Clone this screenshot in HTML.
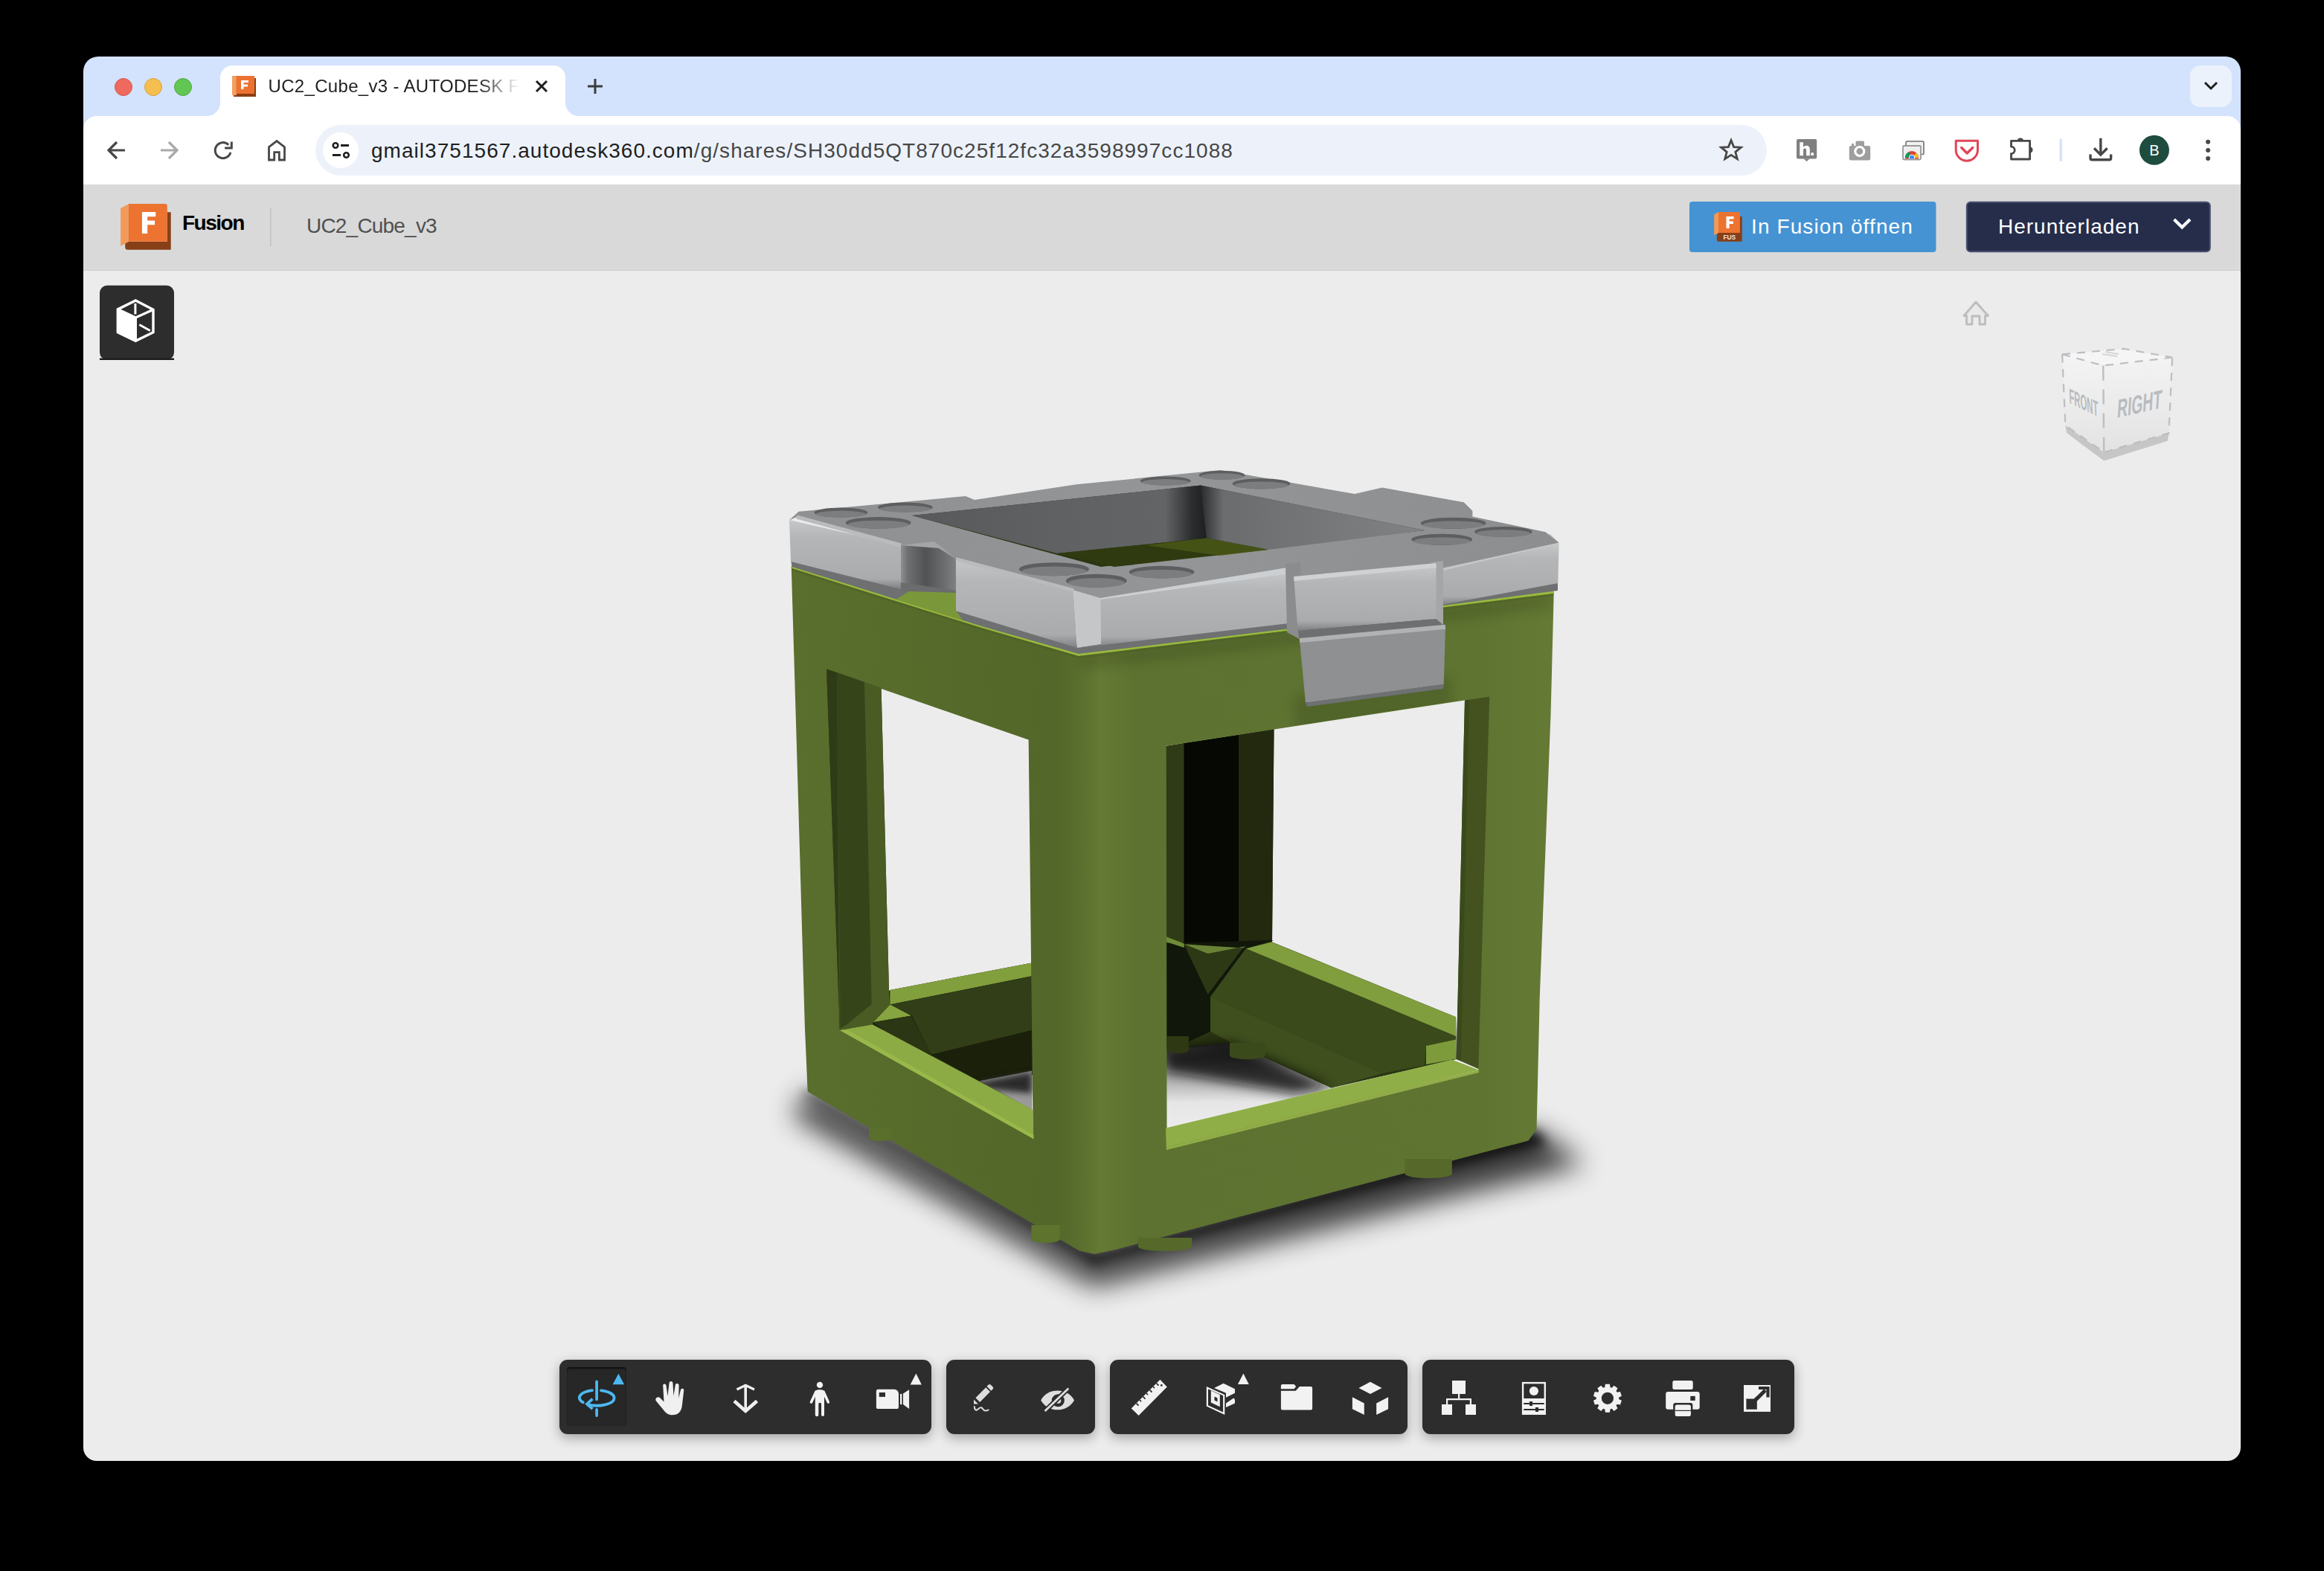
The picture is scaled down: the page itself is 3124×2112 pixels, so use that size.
<!DOCTYPE html>
<html><head><meta charset="utf-8">
<style>
html,body{margin:0;padding:0;}
body{width:3124px;height:2112px;background:#000;position:relative;overflow:hidden;font-family:"Liberation Sans",sans-serif;}
.a{position:absolute;}
#tabstrip{left:112px;top:76px;width:2900px;height:80px;background:#d3e3fd;border-radius:20px 20px 0 0;}
#toolbar{left:112px;top:156px;width:2900px;height:92px;background:#fff;}
#header{left:112px;top:248px;width:2900px;height:115px;background:#d9d9d9;}
#viewer{left:112px;top:364px;width:2900px;height:1600px;background:#ececec;border-radius:0 0 18px 18px;}
.tl{width:24px;height:24px;border-radius:50%;top:105px;}
#tab{left:296px;top:88px;width:464px;height:68px;background:#fff;border-radius:16px 16px 0 0;}
.flare{width:18px;height:18px;top:138px;background:#fff;}
.flare i{position:absolute;left:0;top:0;width:18px;height:18px;background:#d3e3fd;}
#omni{left:424px;top:168px;width:1951px;height:68px;background:#edf2fa;border-radius:34px;}
.ttl{font-size:24px;color:#1f1f1f;white-space:nowrap;}
.url{font-size:28px;white-space:nowrap;}
.grp{background:#2d2d2d;border-radius:11px;top:1828px;height:100px;box-shadow:0 5px 16px rgba(0,0,0,0.32);}
</style></head>
<body>
<div id="tabstrip" class="a"></div>
<div id="toolbar" class="a"></div>
<div id="header" class="a"></div>
<div id="viewer" class="a"></div>

<!-- traffic lights -->
<div class="a tl" style="left:154px;background:#ee6a5f;border:1px solid #d65548;box-sizing:border-box"></div>
<div class="a tl" style="left:194px;background:#f5be4f;border:1px solid #d9a23b;box-sizing:border-box"></div>
<div class="a tl" style="left:234px;background:#62c655;border:1px solid #4fa93f;box-sizing:border-box"></div>

<!-- tab -->
<div id="tab" class="a"></div>
<div class="a flare" style="left:278px;"><i style="border-radius:0 0 18px 0"></i></div>
<div class="a flare" style="left:760px;"><i style="border-radius:0 0 0 18px"></i></div>


<!-- toolbar rounded corners -->
<div class="a" style="left:112px;top:156px;width:18px;height:18px;background:#d3e3fd"><i style="position:absolute;left:0;top:0;width:18px;height:18px;background:#fff;border-radius:18px 0 0 0"></i></div>
<div class="a" style="left:2994px;top:156px;width:18px;height:18px;background:#d3e3fd"><i style="position:absolute;left:0;top:0;width:18px;height:18px;background:#fff;border-radius:0 18px 0 0"></i></div>

<!-- tab dropdown -->
<div class="a" style="left:2944px;top:88px;width:56px;height:56px;border-radius:14px;background:#ecf2fc"></div>

<!-- omnibox -->
<div id="omni" class="a"></div>
<div class="a" style="left:434px;top:178px;width:48px;height:48px;border-radius:50%;background:#fff"></div>

<!-- favicon -->
<svg class="a" style="left:0;top:0" width="3124" height="400" viewBox="0 0 3124 400">
  <!-- tab favicon -->
  <rect x="314" y="105" width="30" height="25" fill="#8a3f14"/>
  <rect x="312" y="102" width="6" height="26" fill="#f0a060"/>
  <rect x="317.5" y="102" width="24.5" height="24" fill="#ec7231"/>
  <path d="M324 108h10v3h-6.5v2.5h5.5v3h-5.5v3.5H324z" fill="#fff"/>
  <!-- tab close -->
  <path d="M721 109L735 123M735 109L721 123" stroke="#1f1f1f" stroke-width="3" stroke-linecap="butt"/>
  <!-- new tab + -->
  <path d="M800 106V126M790 116H810" stroke="#3c3c3c" stroke-width="3"/>
  <!-- tab dropdown chevron -->
  <path d="M2964 111L2972 119L2980 111" fill="none" stroke="#1f1f1f" stroke-width="3"/>
  <!-- back -->
  <path d="M168 202H146M157 191L146 202L157 213" fill="none" stroke="#474747" stroke-width="3.2"/>
  <!-- forward -->
  <path d="M216 202H238M227 191L238 202L227 213" fill="none" stroke="#a9a9a9" stroke-width="3.2"/>
  <!-- reload -->
  <path d="M309.9 204.8A10.5 10.5 0 1 1 307.2 194.7" fill="none" stroke="#474747" stroke-width="3"/>
  <path d="M302.1 199H311.3V190.4" fill="none" stroke="#474747" stroke-width="3"/>
  <!-- home -->
  <path d="M361.5 215V197.6L372 189.6L382.5 197.6V215H375.3V204.6H368.7V215Z" fill="none" stroke="#474747" stroke-width="2.8"/>
  <!-- tune -->
  <circle cx="451" cy="195.5" r="3.3" fill="none" stroke="#1f1f1f" stroke-width="2.6"/>
  <path d="M458 195.5H469M447 208.5H458" stroke="#1f1f1f" stroke-width="2.8"/>
  <circle cx="465.5" cy="208.5" r="3.3" fill="none" stroke="#1f1f1f" stroke-width="2.6"/>
  <!-- star -->
  <path d="M2327 188.5L2330.6 197.6L2340.3 198.1L2332.8 204.3L2335.3 213.7L2327 208.4L2318.7 213.7L2321.2 204.3L2313.7 198.1L2323.4 197.6Z" fill="none" stroke="#474747" stroke-width="2.8" stroke-linejoin="miter"/>
</svg>

<div class="a ttl" style="left:360.5px;top:99px;letter-spacing:0.32px;line-height:34px;width:340px;overflow:hidden;-webkit-mask-image:linear-gradient(90deg,#000 0,#000 282px,transparent 337px)">UC2_Cube_v3 - AUTODESK F</div>
<div class="a url" style="left:499px;top:184px;line-height:38px;letter-spacing:1.04px"><span style="color:#1f1f1f">gmail3751567.autodesk360.com</span><span style="color:#474747">/g/shares/SH30dd5QT870c25f12fc32a3598997cc1088</span></div>


<svg class="a" style="left:0;top:0" width="3124" height="400" viewBox="0 0 3124 400">
  <!-- hypothesis -->
  <rect x="2415" y="187" width="27.2" height="26.5" rx="2" fill="#808080"/>
  <path d="M2424.5 213.4L2428.6 217L2432.7 213.4Z" fill="#808080"/>
  <path d="M2419.3 191.3h4.7v6.6c1.2-1.5 2.8-2.2 4.3-2.2 3 0 4.5 2 4.5 5.2v8.4h-4.7v-7.6c0-1.4-.6-2.1-1.8-2.1s-2.3.8-2.3 2.4v7.3h-4.7z" fill="#fff"/>
  <circle cx="2436.2" cy="207.2" r="2.1" fill="#fff"/>
  <!-- camera -->
  <rect x="2485.8" y="196" width="28.4" height="19.4" rx="2" fill="#9e9e9e"/>
  <rect x="2494.5" y="189.5" width="11.5" height="8" rx="1.5" fill="#9e9e9e"/>
  <rect x="2489" y="193" width="3" height="4" fill="#9e9e9e"/>
  <circle cx="2499.8" cy="203.5" r="6" fill="none" stroke="#fff" stroke-width="3.2"/>
  <circle cx="2499.8" cy="203.5" r="2.6" fill="#9e9e9e"/>
  <!-- cast windows -->
  <rect x="2562" y="190" width="24" height="17.5" rx="1.5" fill="#f2f2f2" stroke="#6e6e6e" stroke-width="1.6"/>
  <rect x="2558" y="196" width="24" height="18.5" rx="1.5" fill="#eeeeee" stroke="#9a9a9a" stroke-width="1.8"/>
  <clipPath id="cw"><rect x="2559" y="197" width="22" height="16.5"/></clipPath>
  <g clip-path="url(#cw)">
    <circle cx="2570" cy="212" r="9" fill="#db4437"/>
    <path d="M2570 212L2561 212A9 9 0 0 1 2565.5 204.2Z" fill="#0f9d58"/>
    <path d="M2570 212L2579 212A9 9 0 0 0 2576 205.5Z" fill="#f4c20d"/>
    <circle cx="2570" cy="212" r="4.2" fill="#fff"/>
    <circle cx="2570" cy="212" r="3.2" fill="#4285f4"/>
  </g>
  <!-- pocket -->
  <path d="M2629.2 189.2H2658.5V201.5A14.6 14.6 0 0 1 2629.2 201.5Z" fill="none" stroke="#e0465a" stroke-width="3" stroke-linejoin="round"/>
  <path d="M2636.7 198.5L2644.2 206L2651.8 198.5" fill="none" stroke="#e0465a" stroke-width="3.4" stroke-linecap="round" stroke-linejoin="round"/>
  <!-- puzzle -->
  <path d="M2703.5 189.3H2728.6V214H2703.5V206.6A4.7 4.7 0 0 0 2703.5 197.2Z" fill="none" stroke="#474747" stroke-width="2.8" stroke-linejoin="round"/>
  <path d="M2711.8 189.5A4.1 4.1 0 0 1 2720 189.5Z" fill="#474747"/>
  <path d="M2728.4 197.5A4.1 4.1 0 0 1 2728.4 205.7Z" fill="#474747"/>
  <!-- separator -->
  <rect x="2768.5" y="186.3" width="3.4" height="31" rx="1.7" fill="#d3e3fd"/>
  <!-- download -->
  <path d="M2823.8 185.8V207M2815 199.3L2823.8 208.1L2832.6 199.3" fill="none" stroke="#474747" stroke-width="3.4"/>
  <path d="M2810 207.5V212.8A2 2 0 0 0 2812 214.8H2835.6A2 2 0 0 0 2837.6 212.8V207.5" fill="none" stroke="#474747" stroke-width="3.4"/>
  <!-- avatar -->
  <circle cx="2895.9" cy="201.8" r="20" fill="#1e4d40"/>
  <!-- kebab -->
  <circle cx="2968.1" cy="190.7" r="3" fill="#474747"/>
  <circle cx="2968.1" cy="202" r="3" fill="#474747"/>
  <circle cx="2968.1" cy="213.1" r="3" fill="#474747"/>
</svg>
<div class="a" style="left:2876px;top:190px;width:40px;text-align:center;font-size:20px;line-height:24px;color:#fff">B</div>


<!-- header -->
<div class="a" style="left:112px;top:360px;width:2900px;height:2px;background:#dcdcdc"></div><div class="a" style="left:112px;top:362px;width:2900px;height:2px;background:#d3d3d3"></div>
<svg class="a" style="left:0;top:240px" width="3124" height="260" viewBox="0 240 3124 260">
  <!-- fusion logo -->
  <path d="M168.2 325.1H229.7V285.3H224.8V324.7H172.9Z" fill="#873f17"/>
  <path d="M168.2 325.1H229.7V335.7H171.7A3.5 3.5 0 0 1 168.2 332.2Z" fill="#873f17"/>
  <path d="M162.1 280.1L172.9 274.2V325.1L162.1 331.1Z" fill="#f19b5a"/>
  <path d="M172.9 274H221.8A3 3 0 0 1 224.8 277V324.7H172.9Z" fill="#ec7330"/>
  <path d="M190.9 285H209.3V291.2H198.2V296.5H208.1V302.2H198.2V313.9H190.9Z" fill="#fff"/>
  <!-- separator -->
  <rect x="363" y="279" width="1.5" height="52" fill="#c2c2c2"/>
  <!-- blue button -->
  <rect x="2271" y="271" width="331.5" height="68" rx="4" fill="#4593d3"/>
  <path d="M2307.8 313H2341.7V291H2338.9V313Z" fill="#873f17"/>
  <path d="M2307.8 313H2341.7V324.8H2309.8A2 2 0 0 1 2307.8 322.8Z" fill="#873f17"/>
  <path d="M2304.1 288.2L2310 285.3V313.2L2304.1 316.2Z" fill="#f19b5a"/>
  <path d="M2310 285.1H2337.4A1.5 1.5 0 0 1 2338.9 286.6V313H2310Z" fill="#ec7330"/>
  <path d="M2320.5 291H2330.5V294.5H2324.6V297.5H2330V301H2324.6V307.1H2320.5Z" fill="#fff"/>
  <text x="2324.8" y="322.2" font-family="Liberation Sans" font-weight="700" font-size="8.4" fill="#f5e6dc" text-anchor="middle">FUS</text>
  <!-- dark button -->
  <rect x="2643.8" y="271.8" width="327" height="66.4" rx="5" fill="#252d4b" stroke="#4b5272" stroke-width="2"/>
  <path d="M2922.5 295L2933.2 305.5L2944 295" fill="none" stroke="#fff" stroke-width="4.2"/>
  <!-- cube button -->
  <rect x="134" y="383.8" width="100" height="100" rx="10" fill="#2d2d2d"/>
  <rect x="134" y="481.5" width="100" height="2.5" fill="#1e1e1e"/>
  <path d="M158.3 415.9L182.3 427V458.3L158.3 446.8Z" fill="#fff" stroke="#fff" stroke-width="2.5" stroke-linejoin="round"/>
  <path d="M182.3 404L206 416.3V446.8L182.3 458.3L158.3 446.8V415.9Z" fill="none" stroke="#fff" stroke-width="3.4" stroke-linejoin="miter"/>
  <path d="M158.3 415.9L182.3 427L206 416.3M182.3 427V458.3" fill="none" stroke="#fff" stroke-width="3.4"/>
  <path d="M181.9 407.9V422.4M187.3 436.5L201.8 444.5" stroke="#fff" stroke-width="3"/>
</svg>
<div class="a" style="left:245px;top:283px;font-size:28px;line-height:34px;font-weight:700;color:#000;letter-spacing:-1.5px">Fusion</div>
<div class="a" style="left:412px;top:287px;font-size:28px;line-height:34px;color:#505050;letter-spacing:-0.8px">UC2_Cube_v3</div>
<div class="a" style="left:2354px;top:288px;font-size:28px;line-height:34px;color:#fff;letter-spacing:1.1px">In Fusion öffnen</div>
<div class="a" style="left:2686px;top:288px;font-size:28px;line-height:34px;color:#fff;letter-spacing:1.0px">Herunterladen</div>


<!-- bottom toolbar -->
<div class="a grp" style="left:752px;width:500px"></div>
<div class="a grp" style="left:1272px;width:200px"></div>
<div class="a grp" style="left:1492px;width:400px"></div>
<div class="a grp" style="left:1912px;width:500px"></div>
<div class="a" style="left:762px;top:1838px;width:80px;height:79px;border-radius:4px;background:#272727;box-shadow:inset 0 2px 2px rgba(0,0,0,0.6)"></div>
<svg class="a" style="left:0;top:1800px" width="3124" height="160" viewBox="0 1800 3124 160">
  <g fill="none" stroke="#4db8f0" stroke-width="3.8" stroke-linecap="round">
    <path d="M802.1 1857.5V1881.3M802.1 1895V1903"/>
    <path d="M796 1869.2A23.5 10.2 0 0 0 783.8 1885.3"/>
    <path d="M790 1888.2A23.5 10.2 0 0 0 825.6 1879.4A23.5 10.2 0 0 0 808 1869.3"/>
    <path d="M796.5 1880.6L789 1887.4L796.5 1894.2" stroke-linejoin="miter" stroke-linecap="butt"/>
  </g>
  <path d="M823.6 1861.3L831.4 1846.7L839.1 1861.3Z" fill="#4db8f0"/>
  <!-- hand -->
  <path d="M881.5 1880.5C882.5 1878 885.5 1877.5 887.5 1879.5L892.5 1884.5L891.2 1862.5C891 1859.8 895.3 1859.8 895.5 1862.5L897.5 1877L899.6 1859C899.8 1856.2 904.2 1856.2 904.4 1859L905.5 1876.5L907.8 1862C908.2 1859.3 912.5 1859.6 912.6 1862.3L912.3 1879.5L915 1868.5C915.6 1866 919.6 1866.5 919.3 1869L916.8 1890C916 1897.5 911.5 1902.3 904 1902.3C898 1902.3 894.6 1899.5 891.5 1895L882 1883.5C881.2 1882.6 881.2 1881.5 881.5 1880.5Z" fill="#f0f0f0"/>
  <!-- zoom arrows -->
  <path d="M1002.2 1863V1894" stroke="#f0f0f0" stroke-width="3.6"/>
  <path d="M990.5 1868L1002.2 1862.3L1014 1868" fill="none" stroke="#f0f0f0" stroke-width="3.4"/>
  <path d="M987 1883.5L1002.2 1897L1017.5 1883.5" fill="none" stroke="#f0f0f0" stroke-width="4.6"/>
  <!-- person -->
  <circle cx="1102" cy="1861.9" r="4.2" fill="#f2f2f2"/>
  <path d="M1095.8 1872.5A4.2 4.2 0 0 1 1100 1868.3H1103.8A4.2 4.2 0 0 1 1108 1872.5V1902A2 2 0 0 1 1104 1902V1887.5A1.85 1.85 0 0 0 1100.3 1887.5V1902A2.25 2.25 0 0 1 1095.8 1902Z" fill="#f2f2f2"/>
  <path d="M1097 1871L1090.5 1885M1107 1871L1113.3 1885" stroke="#f2f2f2" stroke-width="3.6" stroke-linecap="round"/>
  <!-- camera -->
  <path d="M1180.6 1867.8H1202A6 6 0 0 1 1208 1873.8V1891.4A2.7 2.7 0 0 1 1205.3 1894.1H1180.6A2.7 2.7 0 0 1 1177.9 1891.4V1870.5A2.7 2.7 0 0 1 1180.6 1867.8Z" fill="#f2f2f2"/>
  <rect x="1181.8" y="1872" width="8.2" height="5.9" fill="#2d2d2d"/>
  <rect x="1210" y="1873.9" width="2.4" height="14.2" fill="#f2f2f2"/>
  <path d="M1214 1873.6L1222.1 1868.2V1894.1L1214 1888.1Z" fill="#f2f2f2"/>
  <path d="M1223.7 1861.4L1231.4 1846.5L1238.9 1861.4Z" fill="#f2f2f2"/>
  <!-- pencil -->
  <path d="M1326.5 1863.8L1328.8 1861.6A2 2 0 0 1 1331.6 1861.6L1334.6 1864.6A2 2 0 0 1 1334.6 1867.4L1332.3 1869.7Z" fill="#dedede"/>
  <path d="M1325.2 1865.2L1331 1871L1317.2 1885L1311.4 1879.2Z" fill="#dedede"/>
  <path d="M1309 1881.6L1315 1887.6L1309 1887.6Z" fill="#dedede"/>
  <path d="M1309.8 1890.3C1309.6 1895 1312 1896.5 1314 1895C1316 1893.5 1317.5 1891.5 1319.5 1892.5C1321.5 1893.5 1321.8 1896.8 1325 1896.6C1327 1896.5 1328.5 1895.6 1329.2 1894.9" fill="none" stroke="#dedede" stroke-width="2"/>
  <!-- eye slash -->
  <path d="M1399.2 1882.4C1404 1874 1412 1869.6 1421.6 1869.6C1431.2 1869.6 1439.2 1874 1444 1882.4C1439.2 1890.8 1431.2 1895.3 1421.6 1895.3C1412 1895.3 1404 1890.8 1399.2 1882.4Z" fill="#dedede"/>
  <circle cx="1422.3" cy="1882.7" r="6.3" fill="none" stroke="#2d2d2d" stroke-width="4.5"/>
  <path d="M1404.6 1897.1L1436.3 1866.4" stroke="#2d2d2d" stroke-width="6.5"/>
  <path d="M1404.6 1897.1L1436.3 1866.4" stroke="#dedede" stroke-width="2.8"/>
  <!-- ruler -->
  <path d="M1520.7 1893.4L1559.4 1854.7L1568.8 1864.6L1530.6 1902.9Z" fill="#f2f2f2"/>
  <g stroke="#2d2d2d" stroke-width="1.7">
    <path d="M1527.5 1886.6L1530.5 1889.6M1532 1882.1L1534 1884.1M1536.5 1877.6L1539.5 1880.6M1541 1873.1L1543 1875.1M1545.5 1868.6L1548.5 1871.6M1550 1864.1L1552 1866.1M1554.5 1859.6L1557.5 1862.6"/>
  </g>
  <circle cx="1561.3" cy="1862.4" r="1.4" fill="#2d2d2d"/>
  <!-- section -->
  <path d="M1622.9 1865.8L1645.2 1875.6V1900.3L1622.9 1889.9Z" fill="none" stroke="#f2f2f2" stroke-width="2.2"/>
  <path d="M1627.8 1869.5L1639.8 1875.1V1891.3L1627.8 1885.5Z" fill="#f2f2f2"/>
  <path d="M1632.5 1877.5L1636.5 1879.4V1884.5L1632.5 1882.6Z" fill="#2d2d2d"/>
  <path d="M1632.1 1865.9L1644.6 1859.8L1660 1867.2V1872.7L1648 1878.8V1872.7Z" fill="#f2f2f2"/>
  <path d="M1648 1886.5L1658.3 1879.6L1660 1881.4V1886.5L1648 1892.1Z" fill="#f2f2f2"/>
  <path d="M1663.9 1861.1L1671.4 1846.5L1678.8 1861.1Z" fill="#f2f2f2"/>
  <!-- folder -->
  <path d="M1723.9 1861.1H1739.6L1742.2 1864.1L1739.6 1867.2H1721.9V1863.1A2 2 0 0 1 1723.9 1861.1Z" fill="#f2f2f2"/>
  <path d="M1721.9 1869.7H1741.7L1746.9 1864.1H1762.1A2 2 0 0 1 1764.1 1866.1V1893.6A2 2 0 0 1 1762.1 1895.6H1723.9A2 2 0 0 1 1721.9 1893.6Z" fill="#f2f2f2"/>
  <!-- cube parts -->
  <path d="M1826.5 1865.9L1842 1857.7L1857.5 1865.9L1842 1874Z" fill="#f2f2f2"/>
  <path d="M1817.9 1878.3L1833.8 1886.5V1902L1817.9 1894.3Z" fill="#f2f2f2"/>
  <path d="M1850.2 1886.5L1866.1 1878.3V1894.3L1850.2 1902Z" fill="#f2f2f2"/>
  <!-- tree -->
  <g fill="#f2f2f2">
    <rect x="1952" y="1856" width="18" height="18"/>
    <rect x="1938" y="1888" width="14" height="14"/>
    <rect x="1970" y="1888" width="14" height="14"/>
  </g>
  <path d="M1961.1 1874V1881.2M1945.1 1888V1881.2H1976.9V1888" fill="none" stroke="#f2f2f2" stroke-width="2.2"/>
  <!-- doc -->
  <rect x="2047.1" y="1859.1" width="29.7" height="41.7" fill="none" stroke="#f2f2f2" stroke-width="2.4"/>
  <rect x="2046" y="1880" width="32" height="22" fill="#f2f2f2"/>
  <circle cx="2061.9" cy="1870" r="6.1" fill="#f2f2f2"/>
  <path d="M2048.2 1887H2075.7M2048.2 1894.9H2075.7" stroke="#2d2d2d" stroke-width="2"/>
  <rect x="2056" y="1884" width="4" height="6" fill="#2d2d2d"/>
  <rect x="2064" y="1892" width="4" height="6" fill="#2d2d2d"/>
  <!-- gear -->
  <path d="M2157.29 1865.04 L2157.84 1860.85 L2163.96 1860.85 L2164.51 1865.04 L2166.66 1865.73 L2169.57 1862.67 L2174.52 1866.26 L2172.50 1869.98 L2173.83 1871.80 L2177.98 1871.03 L2179.87 1876.85 L2176.06 1878.67 L2176.06 1880.93 L2179.87 1882.75 L2177.98 1888.57 L2173.83 1887.80 L2172.50 1889.62 L2174.52 1893.34 L2169.57 1896.93 L2166.66 1893.87 L2164.51 1894.56 L2163.96 1898.75 L2157.84 1898.75 L2157.29 1894.56 L2155.14 1893.87 L2152.23 1896.93 L2147.28 1893.34 L2149.30 1889.62 L2147.97 1887.80 L2143.82 1888.57 L2141.93 1882.75 L2145.74 1880.93 L2145.74 1878.67 L2141.93 1876.85 L2143.82 1871.03 L2147.97 1871.80 L2149.30 1869.98 L2147.28 1866.26 L2152.23 1862.67 L2155.14 1865.73Z M2169.00 1879.80 A8.1 8.1 0 1 0 2152.80 1879.80 A8.1 8.1 0 1 0 2169.00 1879.80Z" fill="#f2f2f2" fill-rule="evenodd"/>
  <!-- printer -->
  <rect x="2248.3" y="1856.1" width="27.4" height="11.9" rx="2.5" fill="#f2f2f2"/>
  <path d="M2242.2 1871H2281.7A3 3 0 0 1 2284.7 1874V1891.8A3 3 0 0 1 2281.7 1894.8H2275.4V1889A3 3 0 0 0 2272.4 1886H2252.2A3 3 0 0 0 2249.2 1889V1894.8H2242.2A3 3 0 0 1 2239.2 1891.8V1874A3 3 0 0 1 2242.2 1871Z" fill="#f2f2f2"/>
  <rect x="2272.3" y="1876.9" width="6.4" height="6" fill="#2d2d2d"/>
  <rect x="2251.7" y="1888.5" width="21.2" height="15.4" rx="2.5" fill="#f2f2f2"/>
  <path d="M2251.7 1896.4H2272.9" stroke="#2d2d2d" stroke-width="1.2"/>
  <!-- fullscreen -->
  <rect x="2345.1" y="1863.1" width="33.8" height="33.7" fill="#f2f2f2" stroke="#f2f2f2" stroke-width="2.2"/>
  <path d="M2346.3 1880.4H2357.8L2361.8 1876.4V1895.8H2346.3Z" fill="#2d2d2d"/>
  <path d="M2346.3 1895.8V1880.4M2346.3 1895.8H2361.8" stroke="#f2f2f2" stroke-width="2.2" fill="none"/>
  <path d="M2358.5 1883.5L2373 1869" stroke="#2d2d2d" stroke-width="5"/>
  <path d="M2364 1866H2376.5V1878.5" fill="none" stroke="#2d2d2d" stroke-width="4.2"/>
</svg>


<!-- home + view cube -->
<svg class="a" style="left:2600px;top:380px" width="360" height="260" viewBox="2600 380 360 260">
  <defs>
    <linearGradient id="vcf" x1="0" y1="0" x2="0" y2="1">
      <stop offset="0" stop-color="#f4f4f4"/><stop offset="0.5" stop-color="#ececec"/><stop offset="1" stop-color="#e3e3e3"/>
    </linearGradient>
    <linearGradient id="vcr" x1="0" y1="0" x2="0" y2="1">
      <stop offset="0" stop-color="#f3f3f3"/><stop offset="0.5" stop-color="#ebebeb"/><stop offset="1" stop-color="#e2e2e2"/>
    </linearGradient>
  </defs>
  <path d="M2640 424.5L2656 406L2672.5 424.5H2668.5V436H2661V425H2651V436H2643.5V424.5Z" fill="#e9e9e9" stroke="#bdbdbd" stroke-width="2.8" stroke-linejoin="round"/>
  <path d="M2777.9 581.8L2828.2 619.6L2913.8 592.8L2915.4 582.3L2828.2 608L2776.3 571.8Z" fill="#c6c6c6"/>
  <path d="M2772.1 476.3L2855 468.9L2920.1 480.5L2827.2 491.5Z" fill="#f5f5f5"/>
  <path d="M2772.1 476.3L2827.2 491.5L2828.2 608L2776.3 571.8Z" fill="url(#vcf)"/>
  <path d="M2827.2 491.5L2920.1 480.5L2915.4 582.3L2828.2 608Z" fill="url(#vcr)"/>
  <g fill="none" stroke="#bcbec2" stroke-width="2.2" stroke-dasharray="11 9">
    <path d="M2772.1 476.3L2855 468.9L2920.1 480.5"/>
    <path d="M2772.1 476.3L2827.2 491.5L2920.1 480.5"/>
    <path d="M2772.1 476.3L2776.3 571.8L2828.2 608L2915.4 582.3L2920.1 480.5"/>
  </g>
  <path d="M2827.2 491.5L2828.2 608" fill="none" stroke="#bcbec2" stroke-width="2.4" stroke-dasharray="20 12"/>
  <text transform="matrix(0.39 0.185 0.033 1 2781.7 541.9)" font-family="Liberation Sans" font-weight="700" font-size="29" fill="#b8bbc0">FRONT</text>
  <text transform="matrix(0.55 -0.124 -0.06 1 2845.6 561.8)" font-family="Liberation Sans" font-weight="700" font-size="35" fill="#b8bbc0">RIGHT</text>
  <path d="M2826 476L2846 479M2830 473L2848 476" stroke="#d5d5d5" stroke-width="2"/>
</svg>

<!--MODEL-->
<svg class="a" style="left:1000px;top:600px" width="1200" height="1200" viewBox="1000 600 1200 1200">
<defs>
  <filter id="blur18" x="-30%" y="-30%" width="160%" height="160%"><feGaussianBlur stdDeviation="18"/></filter>
  <filter id="blur8" x="-30%" y="-30%" width="160%" height="160%"><feGaussianBlur stdDeviation="8"/></filter>
  <filter id="blur4" x="-30%" y="-30%" width="160%" height="160%"><feGaussianBlur stdDeviation="4"/></filter>
  <linearGradient id="gFaces" gradientUnits="userSpaceOnUse" x1="1064" y1="0" x2="2090" y2="0">
    <stop offset="0" stop-color="#5a6e2d"/><stop offset="0.23" stop-color="#55692a"/><stop offset="0.345" stop-color="#53672a"/><stop offset="0.375" stop-color="#596d2d"/><stop offset="0.405" stop-color="#657a34"/><stop offset="0.45" stop-color="#5d7230"/><stop offset="0.9" stop-color="#5f7431"/><stop offset="1" stop-color="#657a34"/>
  </linearGradient>
  <linearGradient id="gLeft" x1="0" y1="0" x2="1" y2="0">
    <stop offset="0" stop-color="#5a6e2d"/><stop offset="0.5" stop-color="#55692a"/><stop offset="0.92" stop-color="#53672a"/><stop offset="1" stop-color="#586c2c"/>
  </linearGradient>
  <linearGradient id="gRight" gradientUnits="userSpaceOnUse" x1="1450" y1="0" x2="2090" y2="0">
    <stop offset="0" stop-color="#586c2c"/><stop offset="0.035" stop-color="#687d35"/><stop offset="0.12" stop-color="#5f7430"/><stop offset="0.9" stop-color="#617631"/><stop offset="1" stop-color="#687d35"/>
  </linearGradient>
  <linearGradient id="gPost" gradientUnits="userSpaceOnUse" x1="1385" y1="0" x2="1570" y2="0">
    <stop offset="0" stop-color="#566a2b"/><stop offset="0.35" stop-color="#5d722f"/><stop offset="0.6" stop-color="#6a8237"/><stop offset="0.75" stop-color="#647a33"/><stop offset="1" stop-color="#617731"/>
  </linearGradient>
  <linearGradient id="gPlateTop" gradientUnits="userSpaceOnUse" x1="1060" y1="0" x2="2090" y2="0">
    <stop offset="0" stop-color="#8e9092"/><stop offset="0.5" stop-color="#939597"/><stop offset="1" stop-color="#8c8e90"/>
  </linearGradient>
  <linearGradient id="gPlateFace" x1="0" y1="0" x2="0" y2="1">
    <stop offset="0" stop-color="#c5c7c9"/><stop offset="0.25" stop-color="#b4b6b8"/><stop offset="0.85" stop-color="#a9abad"/><stop offset="1" stop-color="#7d7f81"/>
  </linearGradient>
  <linearGradient id="gWallBack" gradientUnits="userSpaceOnUse" x1="1226" y1="0" x2="1622" y2="0">
    <stop offset="0" stop-color="#57595b"/><stop offset="0.5" stop-color="#5f6163"/><stop offset="0.86" stop-color="#626466"/><stop offset="0.95" stop-color="#2c2d2e"/><stop offset="1" stop-color="#1e1f20"/>
  </linearGradient>
  <linearGradient id="gWallRight" gradientUnits="userSpaceOnUse" x1="1614" y1="0" x2="1915" y2="0">
    <stop offset="0" stop-color="#2a2b2c"/><stop offset="0.1" stop-color="#6a6c6e"/><stop offset="1" stop-color="#808284"/>
  </linearGradient>
  <linearGradient id="gShadowWinR" x1="0" y1="0" x2="0" y2="1">
    <stop offset="0" stop-color="#1a1a1a"/><stop offset="0.35" stop-color="#9a9a9a"/><stop offset="0.7" stop-color="#e6e6e6"/><stop offset="1" stop-color="#ececec"/>
  </linearGradient>
</defs>

<!-- ground shadow -->
<path d="M1065 1500L1470 1730L2130 1565L2064 1518L1471 1685L1086 1467Z" fill="#000" opacity="0.75" filter="url(#blur18)"/>
<path d="M1080 1470L1470 1700L2080 1538L2064 1518L1471 1685L1086 1467Z" fill="#000" opacity="0.85" filter="url(#blur8)"/>

<!-- ===== interior seen through left window ===== -->
<path d="M1128.8 1385L1196.4 1330.9L1386.8 1294.4L1389 1445L1310 1456L1172 1382Z" fill="#1d240c"/>
<!-- back-left rail top light strip -->
<path d="M1196.4 1330.9L1386.8 1294.4V1312.2L1196.4 1350.6Z" fill="#819f3d"/>
<!-- back rail inner side dark -->
<path d="M1196.4 1350.6L1386.8 1312.2V1439.4L1316.8 1453.2L1251.7 1417.7L1226 1365.4Z" fill="#323e18"/>
<path d="M1251.7 1417.7L1386.8 1385V1439.4L1316.8 1453.2Z" fill="#1a200a"/>
<!-- ground seen with shadow -->
<path d="M1300 1446L1386.8 1436V1495L1300 1450Z" fill="#1a200a"/>
<path d="M1316.8 1453.2L1386.8 1439.4V1491.7Z" fill="#9a9a9a"/>
<path d="M1290 1460L1386.8 1441L1386.8 1470Z" fill="#2a2a2a" filter="url(#blur4)"/>
<!-- small facet -->
<path d="M1173.7 1374.3L1196.4 1350.6L1225 1365.4Z" fill="#86a43f"/>
<path d="M1173.7 1374.3L1225 1365.4L1251.7 1417.7L1200 1395Z" fill="#2b3614"/>

<!-- ===== interior seen through right window ===== -->
<path d="M1566.7 1003L1712.5 980L1710 1266.5L1957.1 1367.2L1957.7 1424L1789.4 1462.4L1655.2 1401.8L1567 1414.8Z" fill="#2a3512"/>
<!-- back post -->
<path d="M1563 1004L1591.5 999L1591.5 1268L1563 1272Z" fill="#2f3a16"/>
<path d="M1591.5 999L1665 988V1266L1591.5 1268Z" fill="#060803"/>
<path d="M1665 988L1712.5 980L1710 1266.5L1665 1266Z" fill="#22290f"/>
<!-- junction / dark bottom-left area -->
<path d="M1566.7 1268L1712.5 1264L1674.7 1275.2L1627 1340V1386.7L1566.7 1414.8Z" fill="#11170a"/>
<path d="M1591.8 1270L1670.8 1274.4L1623.7 1336.8Z" fill="#2d3915"/>
<path d="M1591.8 1269.3L1670.8 1274.4L1675 1272L1623.7 1282Z" fill="#6a8235"/>
<path d="M1567 1259L1591.8 1268.5L1591.8 1274L1567 1266Z" fill="#6f8a38"/>
<!-- back-right rail top strip -->
<path d="M1709.3 1266.5L1957.1 1367.2V1393.2L1674.7 1275.2Z" fill="#809e3d"/>
<!-- back-right rail inner side -->
<path d="M1674.7 1275.2L1957.1 1393.2L1957.1 1397.5L1917 1406L1915 1432L1858.7 1443L1627 1340Z" fill="#3a4a1b"/>
<path d="M1627 1340L1858.7 1443L1789.4 1462.4L1655.2 1401.8L1627 1386.7Z" fill="#3f4f1d"/>
<!-- small facet right -->
<path d="M1917 1406L1957 1397.5V1423.5L1917 1431Z" fill="#7d9b3a"/>
<!-- ground with shadow in right window -->
<path d="M1567 1410L1655.2 1401.8L1789.4 1462.4L1567 1516.5Z" fill="url(#gShadowWinR)"/>
<path d="M1567 1412L1655 1402L1789 1462L1740 1470L1567 1440Z" fill="#111" opacity="0.8" filter="url(#blur8)"/>
<!-- feet in right window -->
<path d="M1568.7 1393H1597.9V1412A14.6 4 0 0 1 1568.7 1412Z" fill="#2e3914"/>
<path d="M1653 1401.8H1700.7V1419A23.8 5 0 0 1 1653 1419Z" fill="#3b4a1a"/>

<!-- right post bevel -->
<path d="M2007 935L1969 941L1957.7 1424L1992 1439Z" fill="#44521f"/>
<path d="M1975 940L1969 941L1957.7 1424L1964 1426Z" fill="#3a4a1b"/>

<!-- ===== green outer faces ===== -->
<!-- left face with window hole -->
<path fill-rule="evenodd" fill="url(#gFaces)" stroke="url(#gFaces)" stroke-width="1.5" d="M1064.5 762L1180 798.4L1320 842.3L1453 879L1471 1685L1451 1680.7L1086.4 1467L1082.6 1380L1071 980Z
  M1111 899.5L1383.4 994L1389.5 1531.3L1128.8 1385Z"/>
<!-- left post bevel (inner side) -->
<path d="M1111 899.5L1184.6 925L1195 1331L1128.8 1385Z" fill="#3d4c1d"/>
<path d="M1111 899.5L1125 904L1128 1380L1128.8 1385Z" fill="#2f3b16"/>
<path d="M1125 904L1162 917L1172 1360L1130 1382Z" fill="#36441a"/>
<path d="M1162 917L1184.6 925L1195 1331L1172 1360Z" fill="#4a5b24"/>
<path d="M1128.8 1385L1195 1331L1196.4 1350.6L1173.7 1374.3L1172.7 1377.3Z" fill="#4a5b24"/>
<!-- left bottom rail top light strip -->
<path d="M1128.8 1385L1172.7 1377.3L1387.8 1491.7L1389.5 1531.3Z" fill="#8cab45"/>
<path d="M1128.8 1385L1389.5 1531.3L1389.5 1526L1140 1385Z" fill="#a2c24f" opacity="0.6"/>

<!-- front post + right face with window hole -->
<path fill-rule="evenodd" fill="url(#gFaces)" stroke="url(#gFaces)" stroke-width="1.5" d="M1450 879L1734.6 845.6L1933 815.6L2088 796L2083.8 960L2069 1340L2064.8 1517.7L2054 1532.8L1500 1678.9L1471 1685Z
  M1567 1002L2003 935.6L1988 1439.4L1567.8 1541.8Z"/>

<!-- front post extra shading band -->
<path d="M1383.4 994L1453 885.3L1471 1685L1389.5 1531.3Z" fill="url(#gLeft)" opacity="0"/>
<!-- right bottom rail top light strip -->
<path d="M1567 1516.5L1951.8 1424.5L1988 1438.6L1567.8 1542.5Z" fill="#8fae47"/>
<path d="M1567.8 1542.5L1988 1438.6L1988 1442L1567.8 1546Z" fill="#a6c552" opacity="0.7"/>

<!-- shading under plate on faces -->
<defs>
  <linearGradient id="gTopShade" x1="0" y1="0" x2="0" y2="1">
    <stop offset="0" stop-color="#000" stop-opacity="0.16"/><stop offset="1" stop-color="#000" stop-opacity="0"/>
  </linearGradient>
  <linearGradient id="gTabShade" x1="0" y1="0" x2="0" y2="1">
    <stop offset="0" stop-color="#000" stop-opacity="0.22"/><stop offset="1" stop-color="#000" stop-opacity="0"/>
  </linearGradient>
</defs>
<clipPath id="faceClip"><path clip-rule="evenodd" d="M1064.5 762L1180 798.4L1320 842.3L1453 879L1471 1685L1451 1680.7L1086.4 1467L1082.6 1380L1071 980Z M1111 899.5L1383.4 994L1389.5 1531.3L1128.8 1385Z"/><path clip-rule="evenodd" d="M1450 879L1734.6 845.6L1933 815.6L2088 796L2083.8 960L2069 1340L2064.8 1517.7L2054 1532.8L1500 1678.9L1471 1685Z M1567 1002L2003 935.6L1988 1439.4L1567.8 1541.8Z"/></clipPath>
<g clip-path="url(#faceClip)">
<path d="M1455 878L1734.6 845.6L1933 815.6L2088 796L2088 818L1933 838L1734.6 868L1455 900Z" fill="#000" opacity="0.12" filter="url(#blur8)"/>
<path d="M1740 935L1950 908L1952 960L1742 992Z" fill="#000" opacity="0.13" filter="url(#blur8)"/>
</g>
<!-- green top highlight edge -->
<path d="M1064.5 760L1180 796.4L1320 840.3L1450 877L1734.6 843.6L1933 813.6L2088 794L2088 798L1933 817.6L1734.6 847.6L1450 882L1320 844.3L1180 800.4L1064.5 764Z" fill="#9aba3c"/>
<path d="M1064.5 764L1180 800.4L1320 844.3L1450 882L1734.6 847.6L1933 817.6L2088 798L2088 801L1933 820.6L1734.6 850.6L1450 885.5L1320 847.3L1180 803.4L1064.5 767Z" fill="#4c5e25" opacity="0.45"/>

<!-- feet -->
<path d="M1168 1517H1199V1530A15.5 4 0 0 1 1168 1530Z" fill="#5a6f2b"/>
<path d="M1386.5 1647H1424.6V1666A19 5 0 0 1 1386.5 1666Z" fill="#5e742e"/>
<path d="M1530 1664H1602V1676A36 6 0 0 1 1530 1676Z" fill="#56692a"/>
<path d="M1888.6 1558H1951.8V1578A31.6 6 0 0 1 1888.6 1578Z" fill="#56692a"/>

<!-- ===== grey plate ===== -->
<defs>
  <linearGradient id="gNotch" gradientUnits="userSpaceOnUse" x1="1211" y1="0" x2="1285" y2="0">
    <stop offset="0" stop-color="#8e9092"/><stop offset="0.12" stop-color="#6e7072"/><stop offset="0.45" stop-color="#505254"/><stop offset="0.8" stop-color="#6c6e70"/><stop offset="1" stop-color="#7e8082"/>
  </linearGradient>
</defs>
<!-- plate bottom dark band (thin) -->
<path d="M1063 752L1211 789L1285 818L1448 868L1737 834L1933 811L2094 782L2094 794L1933 815L1734.6 845L1450 879L1320 842L1180 798L1064.5 762Z" fill="#6e7072"/>
<!-- notch -->
<path d="M1211 733L1256 726L1285 751.6L1285 797L1211 786Z" fill="url(#gNotch)"/>
<path d="M1211 733L1256 724L1285 751.6L1262 737Z" fill="#a3a5a7"/>
<path d="M1211 783L1285 794L1285 800L1222 796L1211 793Z" fill="#6a6c6e"/>
<path d="M1204 806L1222 795L1285 797L1285 821L1294.6 834.4Z" fill="#7a983a"/>
<!-- front-left face, left segment -->
<path d="M1061 699L1211 733L1211 792L1063 755Z" fill="url(#gPlateFace)"/>
<!-- front-left face, right segment -->
<path d="M1285 751.6L1443 793.6L1448 871L1285 821.3Z" fill="url(#gPlateFace)"/>
<!-- front corner rounded highlight -->
<path d="M1443 793.6L1479 804L1480 866L1448 871Z" fill="#c4c6c8"/>
<!-- front-right face -->
<path d="M1479 802L1734 768L1737 837.5L1448 871L1480 866Z" fill="url(#gPlateFace)"/>
<path d="M1479 793L1734 763L1734 771L1479 806Z" fill="#cdd0d2"/>
<!-- right part face -->
<path d="M1930 769L2095.6 730L2094.3 784L1933 814Z" fill="url(#gPlateFace)"/>
<path d="M1849 747.5L2084 718L2095.6 730L1930 769L1860 756Z" fill="#c3c5c7"/>
<!-- top surface -->
<path d="M1060.7 699.4L1073.6 687.8L1298 667L1310 672L1446.6 651.3L1640 632L1821 664L1858 655.5L1967.8 675.2L1979.4 686.8L1979.4 694.5L2077.5 715.2L2095.6 729.4L1933 765L1930.5 760L1739.4 778L1734 762.6L1479 804L1443 793.6L1285 751.6L1256 728L1211 733L1071 695Z" fill="url(#gPlateTop)"/>
<!-- top front edges highlight -->
<path d="M1071 695L1211 733M1285 751.6L1443 793.6" stroke="#b9bbbd" stroke-width="5" fill="none"/>
<!-- inner opening -->
<path d="M1226 693L1614 652.6L1915 713L1480 762Z" fill="#2b3410"/>
<path d="M1226 693L1614 652.6L1622 723.6L1420.7 744Z" fill="url(#gWallBack)"/>
<path d="M1614 652.6L1915 713L1704.8 739L1622 723.6Z" fill="url(#gWallRight)"/>
<path d="M1420.7 744L1622 723.6L1704.8 739L1498 762Z" fill="#2f3a10"/>
<path d="M1540 733L1622 723.6L1704.8 739L1640 747Z" fill="#4a5a16" opacity="0.8"/>
<!-- holes -->
<g>
<ellipse cx="1130.4" cy="689.1" rx="36.0" ry="6.5" fill="#5c5e60"/>
<ellipse cx="1130.4" cy="691.1" rx="33.5" ry="4.5" fill="#7b7d7f"/>
<ellipse cx="1216.9" cy="682.1" rx="37.0" ry="6.5" fill="#5c5e60"/>
<ellipse cx="1216.9" cy="684.1" rx="34.4" ry="4.5" fill="#7b7d7f"/>
<ellipse cx="1180.7" cy="702.8" rx="44.0" ry="7.7" fill="#5c5e60"/>
<ellipse cx="1180.7" cy="705.1" rx="40.9" ry="5.4" fill="#7b7d7f"/>
<ellipse cx="1417.0" cy="765.2" rx="47.0" ry="9.0" fill="#5c5e60"/>
<ellipse cx="1417.0" cy="767.9" rx="43.7" ry="6.3" fill="#7b7d7f"/>
<ellipse cx="1473.8" cy="780.7" rx="41.0" ry="9.0" fill="#5c5e60"/>
<ellipse cx="1473.8" cy="783.4" rx="38.1" ry="6.3" fill="#7b7d7f"/>
<ellipse cx="1561.6" cy="769.1" rx="44.0" ry="8.3" fill="#5c5e60"/>
<ellipse cx="1561.6" cy="771.6" rx="40.9" ry="5.8" fill="#7b7d7f"/>
<ellipse cx="1566.7" cy="646.5" rx="34.0" ry="6.0" fill="#5c5e60"/>
<ellipse cx="1566.7" cy="648.3" rx="31.6" ry="4.2" fill="#7b7d7f"/>
<ellipse cx="1642.6" cy="638.7" rx="31.0" ry="6.0" fill="#5c5e60"/>
<ellipse cx="1642.6" cy="640.5" rx="28.8" ry="4.2" fill="#7b7d7f"/>
<ellipse cx="1695.5" cy="650.3" rx="39.0" ry="7.0" fill="#5c5e60"/>
<ellipse cx="1695.5" cy="652.4" rx="36.3" ry="4.9" fill="#7b7d7f"/>
<ellipse cx="1953.7" cy="703.3" rx="44.0" ry="7.5" fill="#5c5e60"/>
<ellipse cx="1953.7" cy="705.5" rx="40.9" ry="5.2" fill="#7b7d7f"/>
<ellipse cx="2020.8" cy="714.9" rx="39.0" ry="7.0" fill="#5c5e60"/>
<ellipse cx="2020.8" cy="717.0" rx="36.3" ry="4.9" fill="#7b7d7f"/>
<ellipse cx="1938.2" cy="725.2" rx="41.0" ry="7.5" fill="#5c5e60"/>
<ellipse cx="1938.2" cy="727.5" rx="38.1" ry="5.2" fill="#7b7d7f"/>
</g>
<path d="M1728 758L1748 756L1752 862L1730 850Z" fill="#8a8c8e"/>
<path d="M1924 756L1940 754L1940 840L1924 840Z" fill="#a4a6a8"/>
<!-- tab upper -->
<path d="M1739.4 778L1930.5 760L1930.5 832L1744.6 848Z" fill="url(#gPlateFace)"/>
<path d="M1739.4 778L1930.5 760" stroke="#cfd1d3" stroke-width="6"/>
<!-- tab lower -->
<path d="M1744.6 848L1930.5 832L1943 842.7L1747 861Z" fill="#6d6f71"/>
<path d="M1747 861L1943 842.7L1940.8 920L1755 944.7Z" fill="#8e9092"/>
<path d="M1747 861L1943 842.7" stroke="#b0b2b4" stroke-width="6"/>
<path d="M1755 944.7L1940.8 920L1940 926L1757 950Z" fill="#6e7072"/>
</svg>

<!--/MODEL-->
</body></html>
